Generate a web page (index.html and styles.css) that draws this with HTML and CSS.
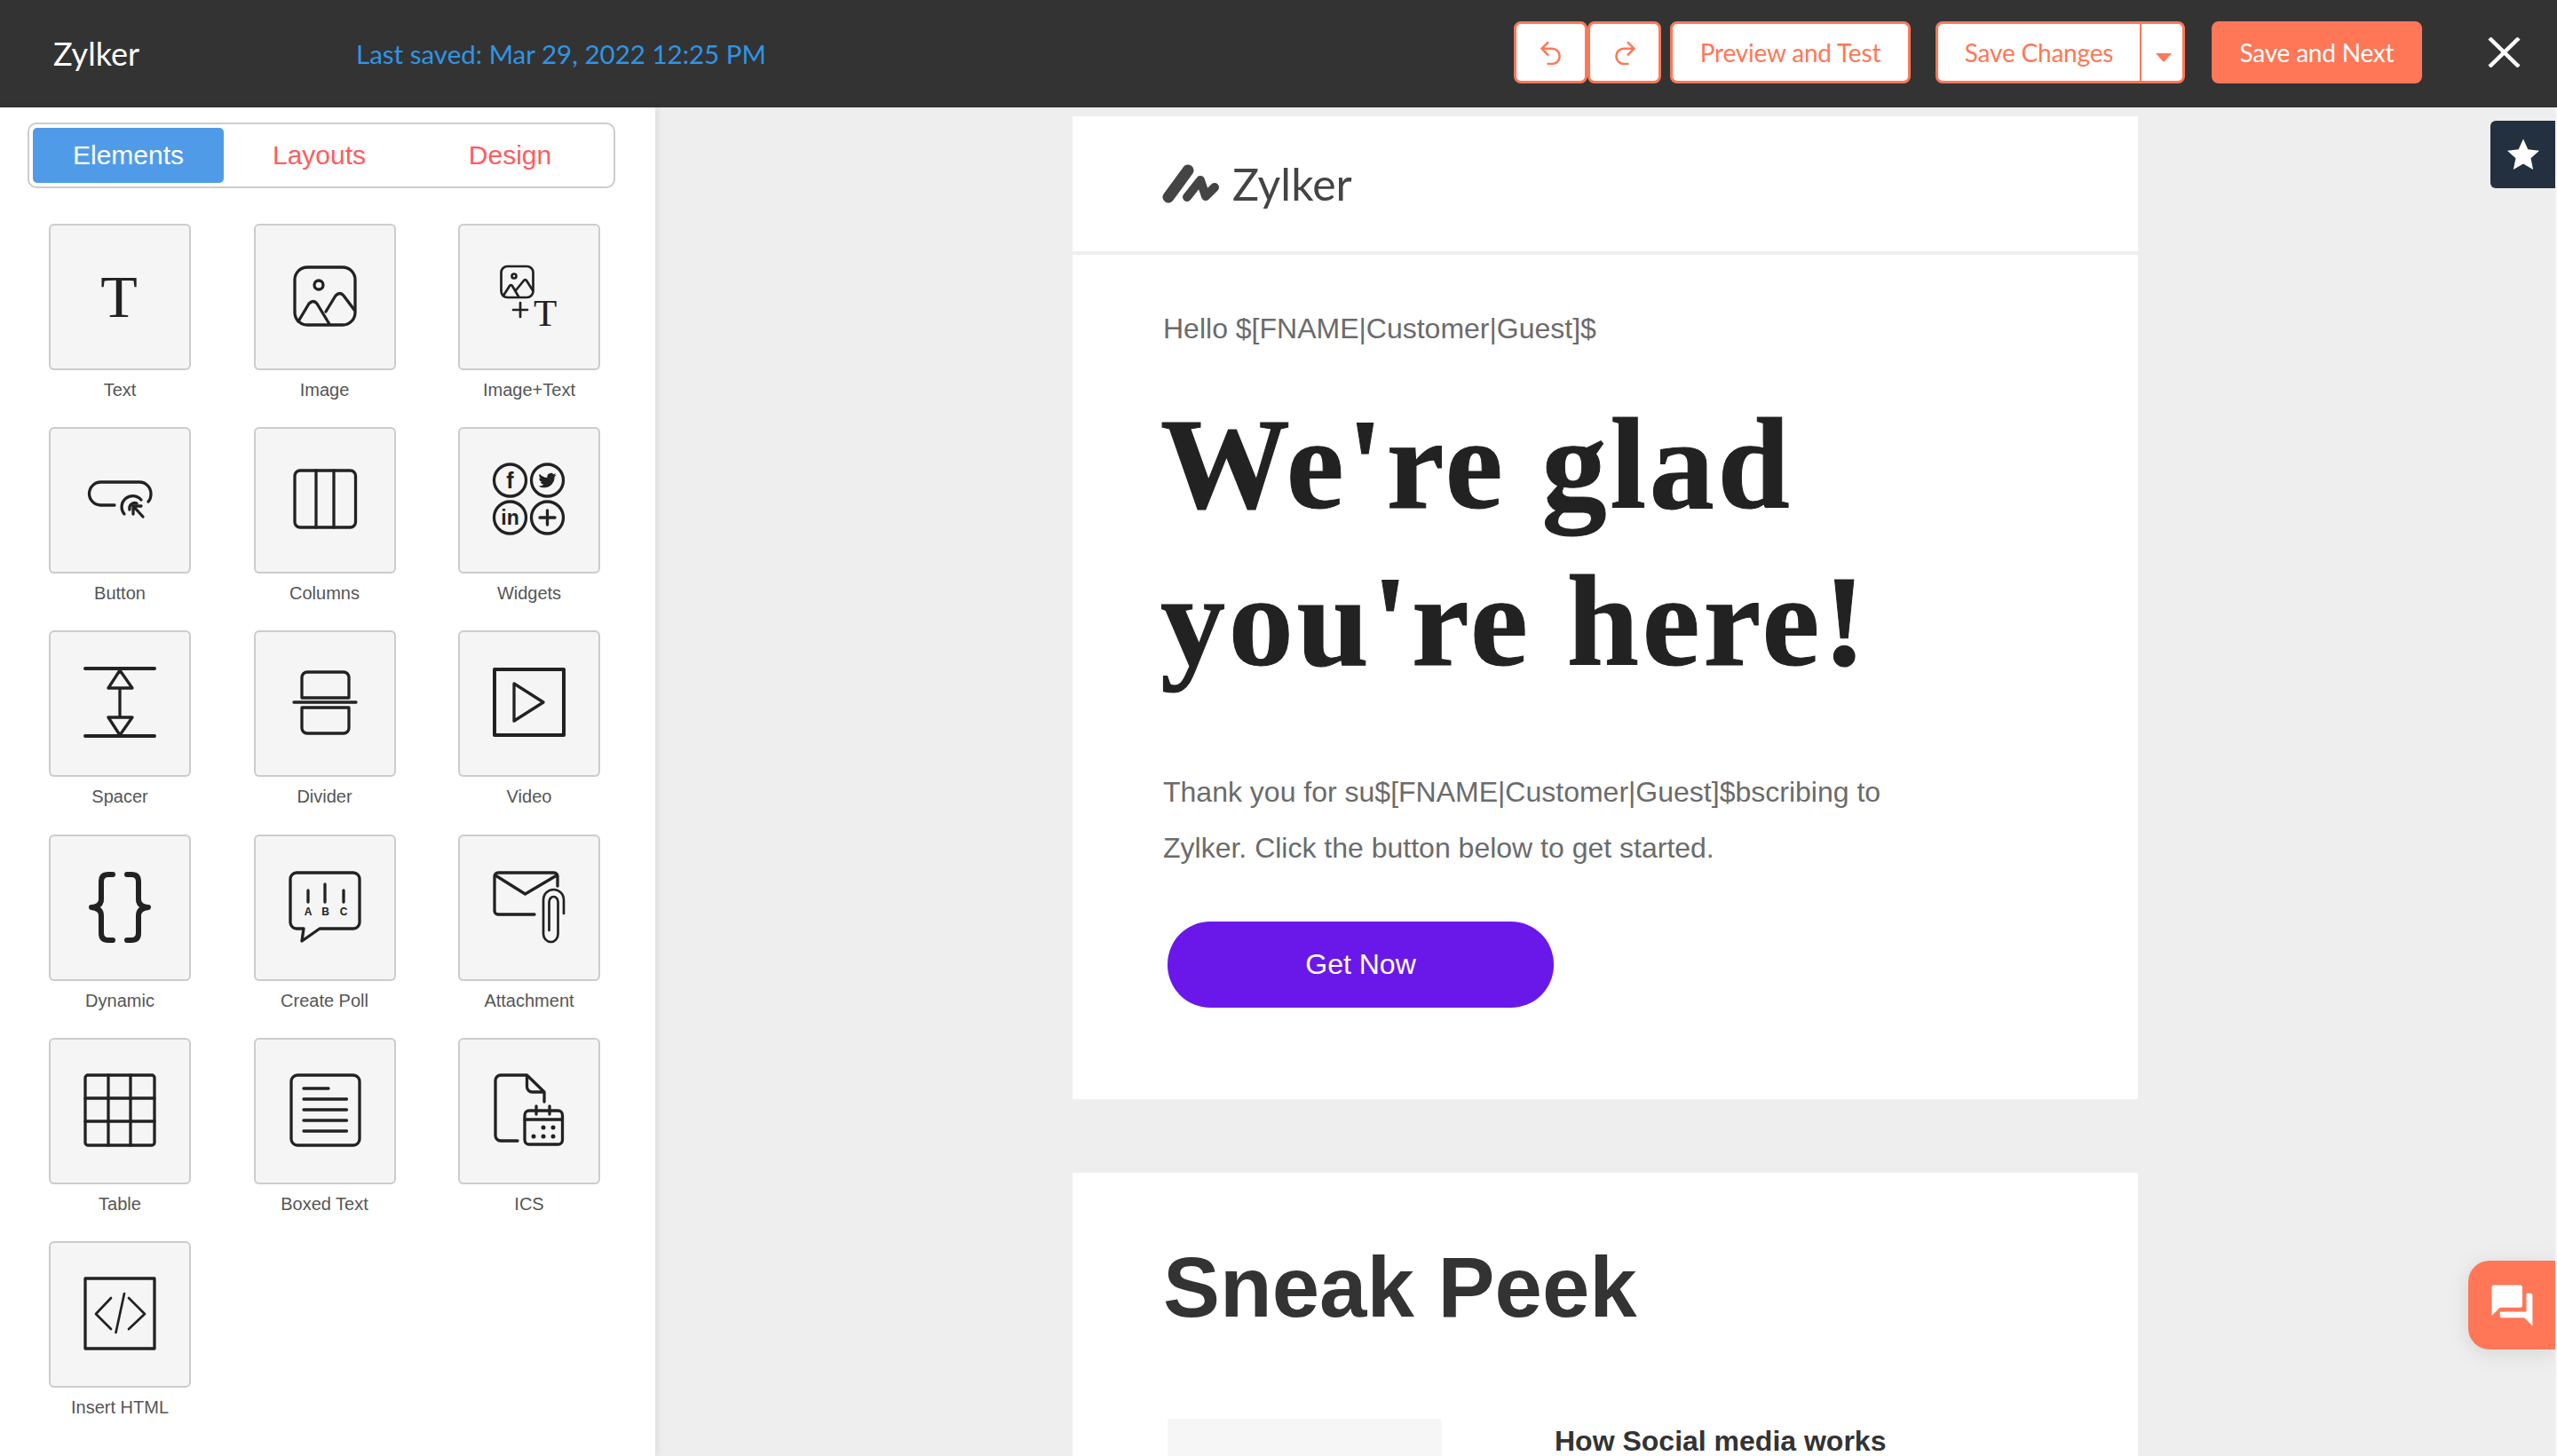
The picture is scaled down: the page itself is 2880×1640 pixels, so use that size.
FILE: index.html
```html
<!DOCTYPE html>
<html lang="en">
  <head>
    <meta charset="UTF-8" />
    <title>Zylker - Email editor</title>
    <link rel="stylesheet" href="styles.css">
  </head>
  <body>
    <!-- Top bar -->
    <header class="topbar">
      <span class="brand">Zylker</span>
      <span class="last-saved">Last saved: Mar 29, 2022 12:25 PM</span>
      <div class="actions">
        <div class="history">
          <button class="btn btn-icon">
            <svg viewBox="0 0 24 28" width="24" height="28"><path d="M9 2.3 1.5 9.7 9 17.3M1.5 9.7H13a8.6 8.6 0 0 1 0 17.3H7.5" /></svg>
          </button>
          <button class="btn btn-icon">
            <svg viewBox="0 0 24 28" width="24" height="28"><path d="M15 2.3 22.5 9.7 15 17.3M22.5 9.7H11a8.6 8.6 0 0 0 0 17.3h5.5" /></svg>
          </button>
        </div>
        <button class="btn btn-preview">Preview and Test</button>
        <div class="split">
          <button class="btn btn-save">Save Changes</button>
          <button class="btn btn-caret"><span class="caret"></span></button>
        </div>
        <button class="btn btn-next">Save and Next</button>
        <button class="close">
          <svg viewBox="0 0 37 34" width="37" height="34"><path d="M2 1 35 33M35 1 2 33" /></svg>
        </button>
      </div>
    </header>

    <div class="workspace">
      <!-- Sidebar -->
      <aside class="sidebar">
        <div class="tabs">
          <a class="tab active">Elements</a>
          <a class="tab">Layouts</a>
          <a class="tab">Design</a>
        </div>
        <div class="elements">
          <div class="element">
            <div class="card"><svg viewBox="0 0 160 165"><text class="glyph" x="79" y="105" text-anchor="middle" font-size="68">T</text></svg></div>
            <span>Text</span>
          </div>
          <div class="element">
            <div class="card"><svg viewBox="0 0 160 165">
              <rect x="46" y="49" width="68" height="65" rx="14" />
              <circle cx="73" cy="69" r="5" />
              <path d="M50 110 62 90q5-5 9 0L85 113M81 99 92 81q5-5 9 0l12 16" />
            </svg></div>
            <span>Image</span>
          </div>
          <div class="element">
            <div class="card"><svg viewBox="0 0 160 165">
              <rect class="thin" x="48.5" y="48" width="36" height="35" rx="7" />
              <circle class="thin" cx="63" cy="59" r="2.5" />
              <path class="thin" d="M51 81 58 70q2-2 3 0L68 82M65 75 74 64q2-2 3 0L84 75" />
              <path class="thin" d="M62 97H78M70 89V105" />
              <text class="glyph" x="85" y="115" font-size="43">T</text>
            </svg></div>
            <span>Image+Text</span>
          </div>
          <div class="element">
            <div class="card"><svg viewBox="0 0 160 165">
              <path d="M74 88H58.5a13 13 0 0 1 0-26h43.5a13 13 0 0 1 13 13c0 4-1 7-3 9" />
              <path d="M85 98a12 12 0 0 1 19-16M91 93a6 6 0 0 1 8-7" />
              <path d="M95 89 106 101M95 89V98M95 89H104" />
            </svg></div>
            <span>Button</span>
          </div>
          <div class="element">
            <div class="card"><svg viewBox="0 0 160 165">
              <rect x="46" y="49" width="68.5" height="64" rx="6" />
              <path d="M70 49V113M90 49V113" />
            </svg></div>
            <span>Columns</span>
          </div>
          <div class="element">
            <div class="card"><svg viewBox="0 0 160 165">
              <circle cx="58.5" cy="60" r="18" />
              <circle cx="100.5" cy="60" r="18" />
              <circle cx="58.5" cy="102" r="18" />
              <circle cx="100.5" cy="102" r="18" />
              <text class="widget-text" x="58.5" y="69" text-anchor="middle" font-size="25">f</text>
              <path class="fill" transform="translate(90.5 50) scale(.84)" d="M23.953 4.57a10 10 0 01-2.825.775 4.958 4.958 0 002.163-2.723c-.951.555-2.005.959-3.127 1.184a4.92 4.92 0 00-8.384 4.482C7.69 8.095 4.067 6.13 1.64 3.162a4.822 4.822 0 00-.666 2.475c0 1.71.87 3.213 2.188 4.096a4.904 4.904 0 01-2.228-.616v.06a4.923 4.923 0 003.946 4.827 4.996 4.996 0 01-2.212.085 4.936 4.936 0 004.604 3.417 9.867 9.867 0 01-6.102 2.105c-.39 0-.779-.023-1.17-.067a13.995 13.995 0 007.557 2.209c9.053 0 13.998-7.496 13.998-13.985 0-.21 0-.42-.015-.63A9.935 9.935 0 0024 4.59z" />
              <text class="widget-text" x="58.5" y="110" text-anchor="middle" font-size="23">in</text>
              <path d="M92 102H109M100.5 94V110" />
            </svg></div>
            <span>Widgets</span>
          </div>
          <div class="element">
            <div class="card"><svg viewBox="0 0 160 165">
              <path class="thick" d="M41 43H119M41 119H119" />
              <path d="M80 45 67 65H94ZM80 65V98M67 98H94L80 118Z" />
            </svg></div>
            <span>Spacer</span>
          </div>
          <div class="element">
            <div class="card"><svg viewBox="0 0 160 165">
              <path d="M54 76V53a6 6 0 0 1 6-6h41a6 6 0 0 1 6 6V76ZM45 81H115M54 87H107V110a6 6 0 0 1-6 6H60a6 6 0 0 1-6-6Z" />
            </svg></div>
            <span>Divider</span>
          </div>
          <div class="element">
            <div class="card"><svg viewBox="0 0 160 165">
              <rect class="thick" x="41" y="44" width="78" height="74" />
              <path d="M63 60 96 81 63 102Z" />
            </svg></div>
            <span>Video</span>
          </div>
          <div class="element">
            <div class="card"><svg viewBox="0 0 160 165">
              <path class="brace" d="M72 45H67q-8 0-8 8V73q0 8-11 9 11 1 11 9V111q0 8 8 8h5M88 45h5q8 0 8 8V73q0 8 11 9-11 1-11 9V111q0 8-8 8H88" />
            </svg></div>
            <span>Dynamic</span>
          </div>
          <div class="element">
            <div class="card"><svg viewBox="0 0 160 165">
              <path d="M74 106 54 120 56 106H48a7 7 0 0 1-7-7V50a7 7 0 0 1 7-7h64a7 7 0 0 1 7 7V99a7 7 0 0 1-7 7Z" />
              <path d="M61 63V76M80 56V76M101 63V76" />
              <text class="poll-text" x="61" y="91" text-anchor="middle">A</text>
              <text class="poll-text" x="80.5" y="91" text-anchor="middle">B</text>
              <text class="poll-text" x="101" y="91" text-anchor="middle">C</text>
            </svg></div>
            <span>Create Poll</span>
          </div>
          <div class="element">
            <div class="card"><svg viewBox="0 0 160 165">
              <path d="M86 90H45a4 4 0 0 1-4-4V47a4 4 0 0 1 4-4h63a4 4 0 0 1 4 4V58M42 46 75.5 67 111 46" />
              <path class="thin" d="M119 89V74c0-7-5-12-11.500-12S96 67 96 74V112c0 5 4 9 8.500 9s8-4 8-9V76c0-3-2-6-5-6s-5 3-5 6V108" />
            </svg></div>
            <span>Attachment</span>
          </div>
          <div class="element">
            <div class="card"><svg viewBox="0 0 160 165">
              <rect x="41" y="42" width="78" height="79" rx="3" />
              <path d="M67 42V121M92 42V121M41 68H119M41 94H119" />
            </svg></div>
            <span>Table</span>
          </div>
          <div class="element">
            <div class="card"><svg viewBox="0 0 160 165">
              <rect x="42" y="42" width="77" height="79" rx="7" />
              <path d="M56 57H84M56 69H104.500M56 81H104.500M56 93H104.500M56 105H104.500" />
            </svg></div>
            <span>Boxed Text</span>
          </div>
          <div class="element">
            <div class="card"><svg viewBox="0 0 160 165">
              <path d="M67 116H48a6 6 0 0 1-6-6V48a6 6 0 0 1 6-6H77.500L97 61V72M77.500 42V55a6 6 0 0 0 6 6H97" />
              <rect x="75" y="82" width="42.500" height="38" rx="5" />
              <path d="M75 92H117.500M88 77V86M103 77V86" />
              <circle class="fill" cx="96" cy="101" r="2.500" />
              <circle class="fill" cx="107" cy="101" r="2.500" />
              <circle class="fill" cx="85" cy="111" r="2.500" />
              <circle class="fill" cx="96" cy="111" r="2.500" />
              <circle class="fill" cx="107" cy="111" r="2.500" />
            </svg></div>
            <span>ICS</span>
          </div>
          <div class="element">
            <div class="card"><svg viewBox="0 0 160 165">
              <rect x="41" y="42" width="78" height="79" />
              <path class="thin" d="M70 64 53 82 70 99M90 64 108 82 90 99M85 59 75.500 103" />
            </svg></div>
            <span>Insert HTML</span>
          </div>
        </div>
      </aside>

      <!-- Email preview -->
      <main class="canvas">
        <div class="email">
          <div class="email-head">
            <svg class="logo" viewBox="8 12 66 44" width="66" height="44">
              <path class="logo-a" d="M16 49 38 19" />
              <path class="logo-b" d="M37 49 52 30 58 48 68 38" />
            </svg>
            <span class="logo-name">Zylker</span>
          </div>
          <section class="hero">
            <p class="hello">Hello $[FNAME|Customer|Guest]$</p>
            <h1>We're glad<br />you're here!</h1>
            <p class="intro">Thank you for su$[FNAME|Customer|Guest]$bscribing to<br />Zylker. Click the button below to get started.</p>
            <a class="cta">Get Now</a>
          </section>
          <section class="peek">
            <h2>Sneak Peek</h2>
            <div class="peek-row">
              <div class="peek-img"></div>
              <h3>How Social media works</h3>
            </div>
          </section>
        </div>

        <!-- Floating tabs -->
        <div class="star-tab">
          <svg viewBox="0 0 24 24" width="40" height="40"><path d="M12 1.500 15.200 8.600 22.800 9.400 17.100 14.600 18.700 22.200 12 18.300 5.300 22.200 6.900 14.600 1.200 9.400 8.800 8.600Z" /></svg>
        </div>
        <div class="chat-tab">
          <svg viewBox="0 0 24 24" width="55" height="55"><path d="M21 6h-2v9H6v2c0 .55.45 1 1 1h11l4 4V7c0-.55-.45-1-1-1zm-4 6V3c0-.55-.45-1-1-1H3c-.55 0-1 .45-1 1v14l4-4h10c.55 0 1-.45 1-1z" /></svg>
        </div>
      </main>
    </div>
  </body>
</html>
```

FILE: styles.css
```css
* {
  margin: 0;
  padding: 0;
  box-sizing: border-box;
}

body {
  width: 2880px;
  height: 1640px;
  overflow: hidden;
  display: flex;
  flex-direction: column;
  font-family: "Liberation Sans", Arial, sans-serif;
  background-color: #eeeeee;
}

/* Top bar */
.topbar {
  display: flex;
  align-items: center;
  flex: 0 0 121px;
  padding-left: 60px;
  background-color: #333333;
  font-family: Lato, sans-serif;
}

.brand {
  width: 341px;
  padding-bottom: 2px;
  font-size: 36px;
  color: #fff;
}

.last-saved {
  font-size: 29.500px;
  color: #2f95e6;
}

.actions {
  display: flex;
  align-items: center;
  margin: 0 0 3px auto;
}

.btn {
  height: 70px;
  border: 3px solid #ff7757;
  border-radius: 8px;
  background-color: #fff;
  color: #ff7757;
  font-family: Lato, sans-serif;
  font-size: 28px;
  letter-spacing: -0.2px;
  cursor: pointer;
}

.history {
  display: flex;
  margin-right: 10px;
}

.btn-icon {
  display: flex;
  align-items: center;
  justify-content: center;
  width: 83px;
}

.btn-icon svg {
  fill: none;
  stroke: #ff7757;
  stroke-width: 2.500;
}

.btn-preview {
  width: 271px;
  margin-right: 28px;
}

.split {
  display: flex;
  margin-right: 30px;
}

.btn-save {
  width: 232px;
  border-right-width: 2px;
  border-radius: 8px 0 0 8px;
}

.btn-caret {
  width: 49px;
  border-left: none;
  border-radius: 0 8px 8px 0;
}

.caret {
  display: inline-block;
  margin-left: 3px;
  border-top: 10px solid #ff7757;
  border-left: 9px solid transparent;
  border-right: 9px solid transparent;
}

.btn-next {
  width: 237px;
  margin-right: 74px;
  background-color: #ff7757;
  color: #fff;
}

.close {
  width: 37px;
  height: 34px;
  margin-right: 41px;
  border: none;
  background: none;
  cursor: pointer;
}

.close svg {
  display: block;
  fill: none;
  stroke: #fff;
  stroke-width: 4.500;
}

.workspace {
  display: flex;
  flex: 1;
  min-height: 0;
}

/* Sidebar */
.sidebar {
  flex: 0 0 738px;
  padding: 17px 0 0 31px;
  background-color: #fff;
  box-shadow: 2px 0 8px rgba(0, 0, 0, 0.08);
  z-index: 1;
}

.tabs {
  display: flex;
  width: 662px;
  height: 74px;
  padding: 4px;
  border: 2px solid #cccccc;
  border-radius: 10px;
}

.tab {
  width: 215px;
  border-radius: 5px;
  color: #ff5c60;
  font-size: 30px;
  line-height: 62px;
  text-align: center;
  cursor: pointer;
}

.tab.active {
  background-color: #509be8;
  color: #fff;
}

.elements {
  display: grid;
  grid-template-columns: repeat(3, 160px);
  column-gap: 70.500px;
  row-gap: 30.200px;
  margin: 40px 0 0 24px;
}

.element {
  text-align: center;
  font-size: 20px;
  line-height: 24px;
  color: #555555;
}

.card {
  height: 165px;
  margin-bottom: 10px;
  border-radius: 6px;
  background-color: #f5f5f5;
  box-shadow: inset 0 0 0 2px #cccccc;
}

.card svg {
  display: block;
  width: 160px;
  height: 165px;
  fill: none;
  stroke: #222222;
  stroke-width: 3.300;
  stroke-linecap: round;
  stroke-linejoin: round;
}

.card svg .thin {
  stroke-width: 2.700;
}

.card svg .thick {
  stroke-width: 4;
}

.card svg .brace {
  stroke-width: 6;
}

.card svg .fill {
  fill: #222222;
  stroke: none;
}

.card svg text {
  stroke: none;
  fill: #222222;
}

.glyph {
  font-family: "Liberation Serif", serif;
}

.widget-text {
  font-weight: bold;
}

.poll-text {
  font-size: 12px;
  font-weight: bold;
}

/* Email preview */
.canvas {
  position: relative;
  flex: 1;
  padding-top: 10px;
  overflow: hidden;
  border-right: 2px solid #f5f5f5;
}

.email {
  width: 1200px;
  margin: 0 auto;
}

.email-head {
  display: flex;
  align-items: center;
  gap: 14px;
  height: 152px;
  margin-bottom: 4px;
  padding: 0 0 0 100px;
  background-color: #fff;
}

.logo {
  fill: none;
  stroke: #444444;
  stroke-linecap: round;
  stroke-linejoin: round;
}

.logo-a {
  stroke-width: 13;
}

.logo-b {
  stroke-width: 10;
}

.logo-name {
  font-family: Lato, sans-serif;
  font-size: 50px;
  color: #444444;
}

.hero {
  height: 951px;
  margin-bottom: 83px;
  padding: 63px 0 0 102px;
  background-color: #fff;
}

.hello {
  font-size: 32px;
  line-height: 40px;
  color: #6b6b6b;
}

h1 {
  margin: 45px 0 0 -3px;
  font-family: "Liberation Serif", serif;
  font-size: 146px;
  line-height: 177px;
  letter-spacing: 3.800px;
  color: #222222;
  -webkit-text-stroke: 1px #222222;
}

.intro {
  margin-top: 72px;
  font-size: 32px;
  line-height: 63px;
  color: #6b6b6b;
}

.cta {
  display: block;
  width: 435px;
  height: 97px;
  margin: 51px 0 0 5px;
  border-radius: 48px;
  background-color: #6a18ea;
  color: #fff;
  font-size: 32px;
  line-height: 97px;
  text-align: center;
  cursor: pointer;
}

.peek {
  height: 400px;
  padding: 74px 0 0 102px;
  background-color: #fff;
}

h2 {
  font-size: 96px;
  line-height: 110px;
  color: #333333;
}

.peek-row {
  display: flex;
  gap: 127px;
  margin: 93px 0 0 5px;
}

.peek-img {
  flex: 0 0 309px;
  height: 300px;
  border-radius: 4px;
  background-color: #f6f6f6;
}

h3 {
  padding-top: 9px;
  font-size: 32px;
  line-height: 32px;
  color: #333333;
}

/* Floating tabs */
.star-tab {
  position: absolute;
  top: 15px;
  right: 0;
  display: flex;
  align-items: center;
  justify-content: center;
  width: 73px;
  height: 76px;
  border-radius: 6px 0 0 6px;
  background-color: #22303f;
}

.star-tab svg {
  fill: #fff;
}

.chat-tab {
  position: absolute;
  top: 1299px;
  right: 0;
  display: flex;
  align-items: center;
  justify-content: center;
  width: 98px;
  height: 100px;
  border-radius: 24px 0 0 24px;
  background-color: #ff7757;
  box-shadow: 0 4px 24px rgba(0, 0, 0, 0.1);
}

.chat-tab svg {
  fill: #fff;
}
```
